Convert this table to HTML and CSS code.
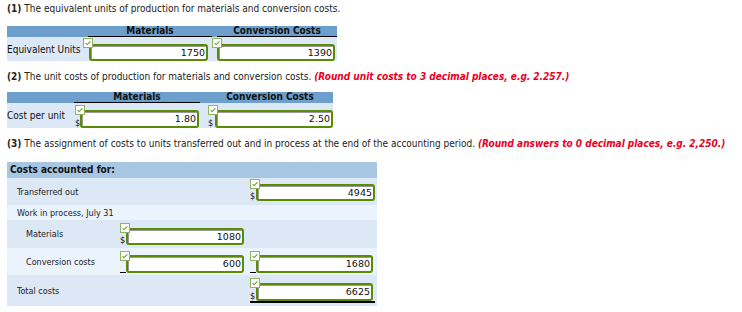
FILE: index.html
```html
<!DOCTYPE html>
<html>
<head>
<meta charset="utf-8">
<link rel="stylesheet" href="styles.css">
</head>
<body>
<div class="page">
  <p class="q q1"><b>(1)</b> The equivalent units of production for materials and conversion costs.</p>
  <div class="t1">
    <div class="hd"></div>
    <div class="hd"><span class="ul">Materials</span></div>
    <div class="hd hd-c"><span class="ul">Conversion Costs</span></div>
    <div class="lbl">Equivalent Units</div>
    <div class="cell c1a"><div class="f"><i class="chk"><svg width="10" height="10" viewBox="0 0 10 10"><rect x="0.5" y="0.5" width="9" height="9" fill="#fff" stroke="#8fb560"/><path d="M2.6 5.2 L4.2 6.6 L7.4 3.4" fill="none" stroke="#6e9d2c" stroke-width="1.1"/></svg></i><div class="inp w119">1750</div></div></div>
    <div class="cell c1b"><div class="f"><i class="chk"><svg width="10" height="10" viewBox="0 0 10 10"><rect x="0.5" y="0.5" width="9" height="9" fill="#fff" stroke="#8fb560"/><path d="M2.6 5.2 L4.2 6.6 L7.4 3.4" fill="none" stroke="#6e9d2c" stroke-width="1.1"/></svg></i><div class="inp w118">1390</div></div></div>
  </div>

  <p class="q q2"><b>(2)</b> The unit costs of production for materials and conversion costs. <em class="note">(Round unit costs to 3 decimal places, e.g. 2.257.)</em></p>
  <div class="t2">
    <div class="hd"></div>
    <div class="hd"><span class="ul ul2">Materials</span></div>
    <div class="hd"><span class="plain">Conversion Costs</span></div>
    <div class="lbl">Cost per unit</div>
    <div class="cell c2a"><div class="f"><i class="chk"><svg width="10" height="10" viewBox="0 0 10 10"><rect x="0.5" y="0.5" width="9" height="9" fill="#fff" stroke="#8fb560"/><path d="M2.6 5.2 L4.2 6.6 L7.4 3.4" fill="none" stroke="#6e9d2c" stroke-width="1.1"/></svg></i><span class="dol">$</span><div class="inp w119 h18">1.80</div></div></div>
    <div class="cell c2b"><div class="f"><i class="chk"><svg width="10" height="10" viewBox="0 0 10 10"><rect x="0.5" y="0.5" width="9" height="9" fill="#fff" stroke="#8fb560"/><path d="M2.6 5.2 L4.2 6.6 L7.4 3.4" fill="none" stroke="#6e9d2c" stroke-width="1.1"/></svg></i><span class="dol">$</span><div class="inp w118 h18">2.50</div></div></div>
  </div>

  <p class="q q3"><b>(3)</b> The assignment of costs to units transferred out and in process at the end of the accounting period. <em class="note">(Round answers to 0 decimal places, e.g. 2,250.)</em></p>
  <div class="t3">
    <div class="th">Costs accounted for:</div>
    <div class="r r-dark r-to">
      <div class="l3">Transferred out</div>
      <div></div>
      <div class="cell"><div class="f"><i class="chk"><svg width="10" height="10" viewBox="0 0 10 10"><rect x="0.5" y="0.5" width="9" height="9" fill="#fff" stroke="#8fb560"/><path d="M2.6 5.2 L4.2 6.6 L7.4 3.4" fill="none" stroke="#6e9d2c" stroke-width="1.1"/></svg></i><span class="dol">$</span><div class="inp w119">4945</div></div></div>
    </div>
    <div class="r r-light r-wip">
      <div class="l3">Work in process, July 31</div>
    </div>
    <div class="r r-dark r-mat">
      <div class="l3 ind">Materials</div>
      <div class="cell"><div class="f"><i class="chk"><svg width="10" height="10" viewBox="0 0 10 10"><rect x="0.5" y="0.5" width="9" height="9" fill="#fff" stroke="#8fb560"/><path d="M2.6 5.2 L4.2 6.6 L7.4 3.4" fill="none" stroke="#6e9d2c" stroke-width="1.1"/></svg></i><span class="dol">$</span><div class="inp w118">1080</div></div></div>
      <div></div>
    </div>
    <div class="r r-light r-conv">
      <div class="l3 ind">Conversion costs</div>
      <div class="cell"><div class="f"><i class="chk"><svg width="10" height="10" viewBox="0 0 10 10"><rect x="0.5" y="0.5" width="9" height="9" fill="#fff" stroke="#8fb560"/><path d="M2.6 5.2 L4.2 6.6 L7.4 3.4" fill="none" stroke="#6e9d2c" stroke-width="1.1"/></svg></i><span class="dol dol-ul"></span><div class="inp w118 h18">600</div></div></div>
      <div class="cell"><div class="f"><i class="chk"><svg width="10" height="10" viewBox="0 0 10 10"><rect x="0.5" y="0.5" width="9" height="9" fill="#fff" stroke="#8fb560"/><path d="M2.6 5.2 L4.2 6.6 L7.4 3.4" fill="none" stroke="#6e9d2c" stroke-width="1.1"/></svg></i><span class="dol dol-ul"></span><div class="inp w117 h18">1680</div></div></div>
    </div>
    <div class="r r-dark r-tot">
      <div class="l3">Total costs</div>
      <div></div>
      <div class="cell"><div class="f f-tot"><i class="chk"><svg width="10" height="10" viewBox="0 0 10 10"><rect x="0.5" y="0.5" width="9" height="9" fill="#fff" stroke="#8fb560"/><path d="M2.6 5.2 L4.2 6.6 L7.4 3.4" fill="none" stroke="#6e9d2c" stroke-width="1.1"/></svg></i><span class="dol">$</span><div class="inp w117 h18">6625</div></div></div>
    </div>
  </div>
</div>
</body>
</html>
```

FILE: styles.css
```css
* { box-sizing: border-box; }
html, body { margin: 0; padding: 0; background: #fff; }
body {
  font-family: "DejaVu Sans Condensed", "DejaVu Sans", Verdana, sans-serif;
  font-stretch: condensed;
  font-size: 10px;
  color: #222;
}
.page { padding: 0 0 0 7px; }

.q { margin: 0; line-height: 13px; white-space: nowrap; }
.q b { font-weight: bold; }
.q1 { padding-top: 2px; }
.q2 { margin-top: 9px; }
.q3 { margin-top: 9px; }
.note { color: #e8001f; font-weight: bold; font-style: italic; }

/* shared cells */
.hd { background: #6c9fcb; height: 11px; }
.hd span { display: block; text-align: center; font-weight: bold; color: #111; line-height: 10px; height: 11px; }
.hd .ul { border-bottom: 1px solid #000; }
.lbl { background: #dce8f6; display: flex; align-items: center; color: #111; }
.cell { background: #dce8f6; }

.f { position: relative; display: flex; align-items: flex-end; }
.chk { position: absolute; left: 0; top: 0; width: 10px; height: 10px; display: block; line-height: 0; }
.chk svg { display: block; }
.dol { width: 5px; font-size: 9px; line-height: 9px; color: #111; flex: none; }
.dol-ul { height: 1px; border-bottom: 1px solid #000; }

.inp {
  height: 17px;
  border: 2px solid #5b8a05;
  border-radius: 3px;
  background: #fff;
  box-shadow: inset 1px 1px 0 #9a9a9a;
  text-align: right;
  font-family: "DejaVu Sans", Verdana, sans-serif;
  font-stretch: normal;
  font-size: 9.5px;
  line-height: 13px;
  padding: 0 1px 0 0;
  color: #111;
  flex: none;
}
.w119 { width: 119px; }
.w118 { width: 118px; }
.w117 { width: 117px; }
.h18 { height: 18px; }

/* table 1 */
.t1 {
  margin-top: 11px;
  display: grid;
  grid-template-columns: 76px 129px 125px;
  grid-template-rows: 11px 24px;
  width: 330px;
}
.t1 .hd span { margin-left: 5px; }
.t1 .cell .f { padding: 6px 0 0 6px; margin-top: 1px; }
.t1 .c1b .f { padding-left: 5px; }

/* table 2 */
.t2 {
  margin-top: 9px;
  display: grid;
  grid-template-columns: 67px 131px 128px;
  grid-template-rows: 11px 25px;
  width: 326px;
}
.t2 .ul2 { margin-right: 5px; }
.t2 .plain { margin-left: 2px; }
.t2 .c2a .f { margin: 2px 0 0 1px; padding-top: 5px; }
.t2 .c2b .f { margin: 2px 0 0 3px; padding-top: 5px; }
.t2 .c2b .dol { width: 7px; }

/* table 3 */
.t3 { margin-top: 12px; width: 370px; }
.th { background: #a7c6e1; height: 16px; line-height: 16px; padding-left: 3px; font-weight: bold; color: #111; }
.r { display: grid; grid-template-columns: 113px 130px 127px; }
.r-dark { background: #dce8f6; }
.r-light { background: #ebf3fd; }
.r .cell { background: transparent; }
.l3 { display: flex; align-items: center; padding-left: 10px; font-size: 9px; color: #222; font-family: "DejaVu Sans Condensed", "DejaVu Sans", sans-serif; }
.l3.ind { padding-left: 19px; }
.r-to { height: 27px; }
.r-wip { height: 15px; display: block; }
.r-wip .l3 { height: 15px; }
.r-mat { height: 28px; }
.r-conv { height: 27px; }
.r-tot { height: 31px; }
.r .f { padding-top: 5px; }
.r-to .f { margin-top: 1px; }
.r-mat .f { margin-top: 3px; }
.r-conv .f { margin-top: 3px; padding-top: 4px; }
.r-tot .f { margin-top: 3px; }
.f-tot { border-bottom: 2px solid #000; width: 125px; }
.r .dol { width: 6px; }
```
